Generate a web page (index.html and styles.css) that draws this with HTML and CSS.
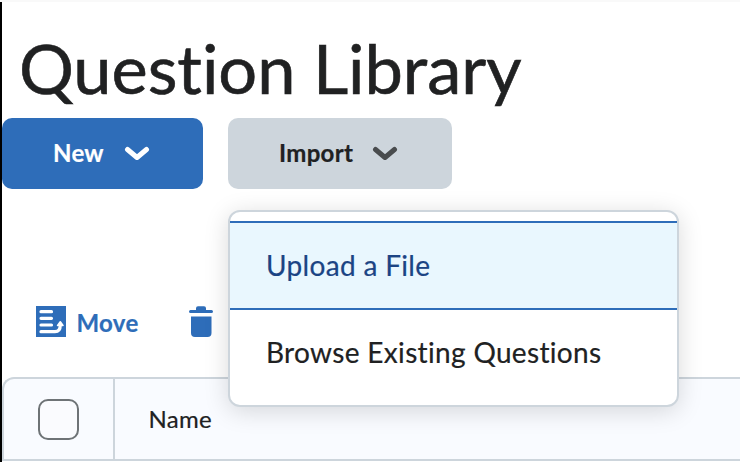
FILE: index.html
```html
<!DOCTYPE html>
<html lang="en">
<head>
<meta charset="utf-8">
<title>Question Library</title>
<link rel="stylesheet" href="styles.css">
</head>
<body>
<main class="page">
  <h1 class="title">Question Library</h1>
  <div class="buttons">
    <button class="btn btn-primary"><span class="btn-label">New</span>
      <svg class="chevron" width="26" height="16" viewBox="0 0 26 16"><path d="M3.5 3.5 13 11.5 22.5 3.5"/></svg>
    </button>
    <div class="dropdown">
      <button class="btn btn-import"><span class="btn-label">Import</span>
        <svg class="chevron" width="26" height="16" viewBox="0 0 26 16"><path d="M3.5 3.5 13 11.5 22.5 3.5"/></svg>
      </button>
      <div class="menu">
        <a class="item active"><span>Upload a File</span></a>
        <a class="item"><span>Browse Existing Questions</span></a>
      </div>
    </div>
  </div>
  <div class="actions">
    <svg class="move-icon" width="30" height="31" viewBox="0 0 30 31">
      <path class="fill" d="M0 0h30v31H0z"/>
      <path class="line" d="M5 5.7H15.5M5 12.3H15.5M5 19H15.5M5 25.7H19Q24.3 25.7 24.3 19"/>
      <path class="head" d="M24.3 15.8 27 19.4H21.6z"/>
    </svg>
    <span class="move">Move</span>
    <svg class="trash" width="24" height="31" viewBox="0 0 24 31">
      <path class="fill" d="M7 4V2.2Q7 .3 9 .3h6q2 0 2 1.9V4h5.5a1.5 1.5 0 0 1 0 3h-21a1.5 1.5 0 0 1 0-3zM2 10.5h20.5V27q0 4-4 4H6q-4 0-4-4z"/>
    </svg>
  </div>
  <div class="table">
    <div class="cell check"><span class="box"></span></div>
    <div class="cell name"><span>Name</span></div>
  </div>
</main>
</body>
</html>
```

FILE: styles.css
```css
* { box-sizing: border-box; }
body {
  margin: 0;
  background: #fff;
  color: #202122;
  font-family: Lato, "Liberation Sans", sans-serif;
  overflow: hidden;
}
.page {
  height: 462px;
  border-top: 2px solid #f9f9f9;
  background: linear-gradient(#000, #000) 0 0 / 2px 100% no-repeat;
  padding-left: 2px;
  overflow: hidden;
}
.title {
  margin: 0;
  height: 116px;
  padding: 24px 0 0 17px;
  font-size: 68.6px;
  line-height: 84px;
  font-weight: 400;
  font-variant-ligatures: none;
  letter-spacing: -.05px;
  -webkit-text-stroke: .6px currentColor;
  white-space: nowrap;
}
.buttons { display: flex; gap: 25px; height: 71px; }
.btn {
  display: flex;
  align-items: center;
  height: 71px;
  padding: 0 0 0 51px;
  border: 0;
  border-radius: 10px;
  font: 700 24px/32px Lato, sans-serif;
  letter-spacing: .3px;
}
.btn-label { width: 71px; padding-bottom: 1px; text-align: left; -webkit-text-stroke: .2px currentColor; }
.btn-primary { width: 201px; background: #2e6db9; color: #fff; }
.btn-import { width: 224px; background: #cdd5dc; color: #202122; }
.btn-import .btn-label { width: 93px; }
.chevron { fill: none; stroke: #fff; stroke-width: 5; stroke-linecap: round; stroke-linejoin: round; }
.btn-import .chevron { stroke: #494c4e; }
.dropdown { position: relative; }
.menu {
  position: absolute;
  z-index: 2;
  top: 92px;
  left: 0;
  width: 451px;
  height: 197px;
  padding-top: 9px;
  border: 2px solid #cdd5dc;
  border-radius: 12px;
  background: #fff;
  box-shadow: 0 4px 24px rgba(0, 0, 0, .15);
}
.item {
  display: flex;
  align-items: center;
  height: 89px;
  padding: 0 0 2px 36px;
  border: solid transparent;
  border-width: 2px 0;
  font-size: 28px;
  line-height: 36px;
  letter-spacing: .33px;
  -webkit-text-stroke: .2px currentColor;
  white-space: nowrap;
}
.item + .item { margin-top: -2px; }
.active { background: #e9f7fe; border-color: #2e6db9; color: #1b4484; }
.actions { display: flex; align-items: flex-start; padding: 117px 0 0 34px; height: 188px; }
.fill { fill: #2e6db9; }
.line { fill: none; stroke: #fff; stroke-width: 3.2; stroke-linecap: round; }
.head { fill: #fff; stroke: #fff; stroke-width: 1.6; stroke-linejoin: round; }
.move {
  width: 112.5px;
  margin-left: 10.5px;
  font-size: 24px;
  line-height: 33px;
  font-weight: 700;
  letter-spacing: .3px;
  -webkit-text-stroke: .2px currentColor;
  color: #2e6db9;
}
.table {
  display: flex;
  width: 760px;
  height: 84px;
  border: 2px solid #cdd5dc;
  border-right: 0;
  border-radius: 12px 0 0 0;
  background: #f9fbff;
}
.cell { display: flex; align-items: center; }
.check { width: 111px; padding-left: 34px; border-right: 2px solid #cdd5dc; }
.box { width: 41px; height: 41px; border: 2px solid #6e7376; border-radius: 10px; background: #fafbfe; }
.name { padding-left: 33.5px; font-size: 24px; line-height: 32px; letter-spacing: .3px; -webkit-text-stroke: .2px currentColor; }
```
